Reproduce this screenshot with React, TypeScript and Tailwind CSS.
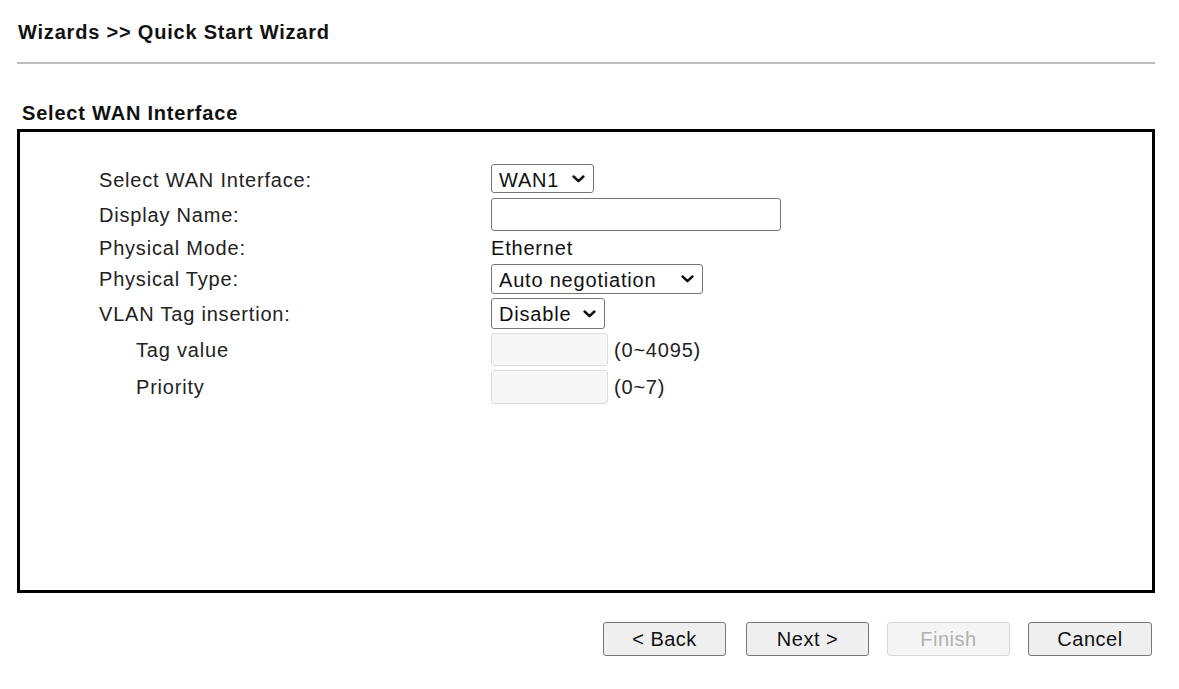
import { useState } from "react";

const font = "font-['Liberation_Sans','Arial',sans-serif]";

function Chevron() {
  return (
    <svg
      viewBox="0 0 13 8"
      className="pointer-events-none absolute right-[9px] top-1/2 h-[8px] w-[13px] -translate-y-1/2"
      aria-hidden
    >
      <path d="M1.6 1.5 6.5 6.2l4.9-4.7" fill="none" stroke="#111" strokeWidth="2.5" strokeLinecap="round" strokeLinejoin="round" />
    </svg>
  );
}

function Select({
  value,
  options,
  className,
}: {
  value: string;
  options: string[];
  className: string;
}) {
  const [v, setV] = useState(value);
  return (
    <span className={`relative inline-block ${className}`}>
      <select
        value={v}
        onChange={(e) => setV(e.target.value)}
        className={`h-full w-full appearance-none rounded-[3px] border border-[#767676] bg-white pl-[7px] pr-7 text-[20px] text-[#111] outline-none ${font}`}
      >
        {options.map((o) => (
          <option key={o}>{o}</option>
        ))}
      </select>
      <Chevron />
    </span>
  );
}

function Row({
  label,
  indent,
  h,
  children,
}: {
  label: string;
  indent?: boolean;
  h: string;
  children: React.ReactNode;
}) {
  return (
    <div className={`flex items-center ${h}`}>
      <div className={`w-[392px] shrink-0 ${indent ? "pl-[37px]" : ""}`}>{label}</div>
      <div className="flex items-center gap-[6px]">{children}</div>
    </div>
  );
}

const btn =
  "h-[34px] rounded-[3px] border border-[#767676] bg-[#efefef] text-[20px] tracking-[0.5px] text-[#111]";

export default function App() {
  return (
    <div className={`min-h-screen bg-white pl-[17px] pr-[24px] pt-[20px] tracking-[0.8px] text-[#222] ${font}`}>
      <h1 className="pl-px text-[20px] font-bold leading-[24px] text-[#111]">
        Wizards &gt;&gt; Quick Start Wizard
      </h1>
      <div className="mt-[18px] h-[2px] bg-[#bdbdbd]" />

      <h2 className="mt-[37px] pl-[5px] text-[20px] font-bold leading-[24px] text-[#111]">
        Select WAN Interface
      </h2>

      <div className="mt-[4px] h-[464px] border-[3px] border-black pl-[79px] pt-[32px] text-[20px]">
        <Row label="Select WAN Interface:" h="h-[32px]">
          <Select value="WAN1" options={["WAN1", "WAN2"]} className="mt-[-3px] h-[29px] w-[103px]" />
        </Row>
        <Row label="Display Name:" h="h-[37px]">
          <input className="h-[33px] w-[290px] rounded-[3px] border border-[#767676] bg-white outline-none" />
        </Row>
        <Row label="Physical Mode:" h="h-[29px]">
          <span className="text-[#111]">Ethernet</span>
        </Row>
        <Row label="Physical Type:" h="h-[34px]">
          <Select
            value="Auto negotiation"
            options={["Auto negotiation", "1000M Full Duplex", "100M Full Duplex"]}
            className="h-[30px] w-[212px]"
          />
        </Row>
        <Row label="VLAN Tag insertion:" h="h-[35px]">
          <Select value="Disable" options={["Disable", "Enable"]} className="h-[31px] w-[114px]" />
        </Row>
        <Row label="Tag value" indent h="h-[37px]">
          <input
            disabled
            className="h-[33px] w-[117px] rounded-[3px] border border-[#dcdcdc] bg-[#f7f7f7]"
          />
          <span>(0~4095)</span>
        </Row>
        <Row label="Priority" indent h="h-[37px]">
          <input
            disabled
            className="h-[34px] w-[117px] rounded-[3px] border border-[#dcdcdc] bg-[#f7f7f7]"
          />
          <span>(0~7)</span>
        </Row>
      </div>

      <div className="mt-[29px] flex justify-end pr-[3px]">
        <button className={`${btn} w-[123px]`}>&lt; Back</button>
        <button className={`${btn} ml-[20px] w-[123px]`}>Next &gt;</button>
        <button
          disabled
          className="ml-[18px] h-[34px] w-[123px] rounded-[3px] border border-[#d6d6d6] bg-[#f5f5f5] text-[20px] tracking-[0.5px] text-[#b0b0b0]"
        >
          Finish
        </button>
        <button className={`${btn} ml-[18px] w-[124px]`}>Cancel</button>
      </div>
    </div>
  );
}
